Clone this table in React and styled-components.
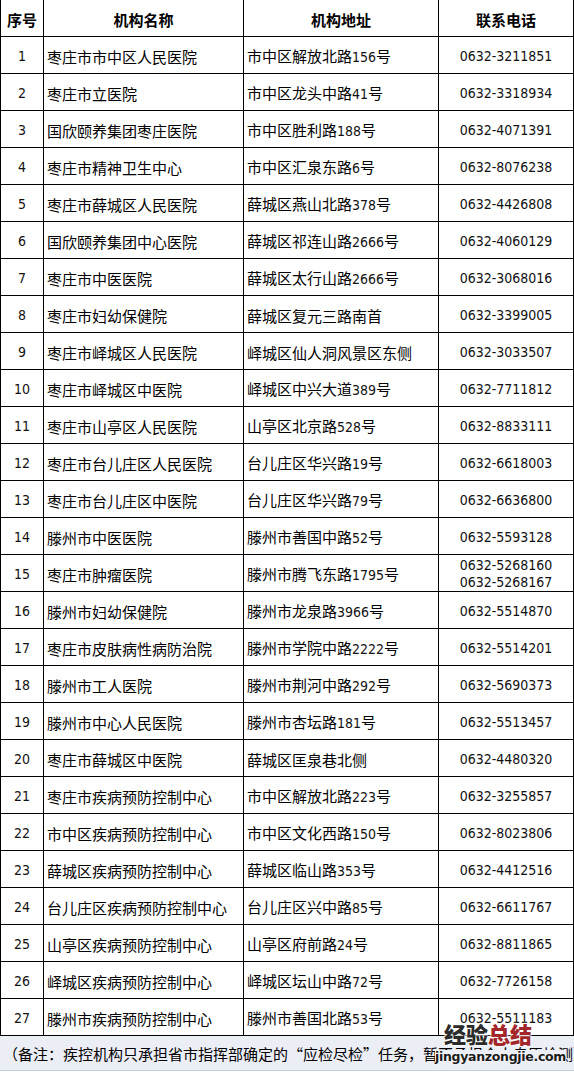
import React from "react";
import styled, { createGlobalStyle } from "styled-components";

const Global = createGlobalStyle`
  html, body { margin: 0; padding: 0; background: #fff; }
  body { font-family: "Noto Sans CJK SC", "Noto Sans", sans-serif; color: #000; }
`;

const rows = [
  ["枣庄市市中区人民医院", "市中区解放北路156号", ["0632-3211851"]],
  ["枣庄市立医院", "市中区龙头中路41号", ["0632-3318934"]],
  ["国欣颐养集团枣庄医院", "市中区胜利路188号", ["0632-4071391"]],
  ["枣庄市精神卫生中心", "市中区汇泉东路6号", ["0632-8076238"]],
  ["枣庄市薛城区人民医院", "薛城区燕山北路378号", ["0632-4426808"]],
  ["国欣颐养集团中心医院", "薛城区祁连山路2666号", ["0632-4060129"]],
  ["枣庄市中医医院", "薛城区太行山路2666号", ["0632-3068016"]],
  ["枣庄市妇幼保健院", "薛城区复元三路南首", ["0632-3399005"]],
  ["枣庄市峄城区人民医院", "峄城区仙人洞风景区东侧", ["0632-3033507"]],
  ["枣庄市峄城区中医院", "峄城区中兴大道389号", ["0632-7711812"]],
  ["枣庄市山亭区人民医院", "山亭区北京路528号", ["0632-8833111"]],
  ["枣庄市台儿庄区人民医院", "台儿庄区华兴路19号", ["0632-6618003"]],
  ["枣庄市台儿庄区中医院", "台儿庄区华兴路79号", ["0632-6636800"]],
  ["滕州市中医医院", "滕州市善国中路52号", ["0632-5593128"]],
  ["枣庄市肿瘤医院", "滕州市腾飞东路1795号", ["0632-5268160", "0632-5268167"]],
  ["滕州市妇幼保健院", "滕州市龙泉路3966号", ["0632-5514870"]],
  ["枣庄市皮肤病性病防治院", "滕州市学院中路2222号", ["0632-5514201"]],
  ["滕州市工人医院", "滕州市荆河中路292号", ["0632-5690373"]],
  ["滕州市中心人民医院", "滕州市杏坛路181号", ["0632-5513457"]],
  ["枣庄市薛城区中医院", "薛城区匡泉巷北侧", ["0632-4480320"]],
  ["枣庄市疾病预防控制中心", "市中区解放北路223号", ["0632-3255857"]],
  ["市中区疾病预防控制中心", "市中区文化西路150号", ["0632-8023806"]],
  ["薛城区疾病预防控制中心", "薛城区临山路353号", ["0632-4412516"]],
  ["台儿庄区疾病预防控制中心", "台儿庄区兴中路85号", ["0632-6611767"]],
  ["山亭区疾病预防控制中心", "山亭区府前路24号", ["0632-8811865"]],
  ["峄城区疾病预防控制中心", "峄城区坛山中路72号", ["0632-7726158"]],
  ["滕州市疾病预防控制中心", "滕州市善国北路53号", ["0632-5511183"]],
];

const Page = styled.div`
  width: 574px;
`;

const Table = styled.div`
  display: grid;
  grid-template-columns: 42px 199px 194px 134px;
  grid-auto-rows: 36px;
  gap: 1px;
  padding: 0 1px 1px 1px;
  background: #000;
`;

const Cell = styled.div`
  background: #fff;
  display: flex;
  flex-direction: column;
  justify-content: center;
  align-items: ${(p) => (p.$left ? "flex-start" : "center")};
  padding: 2px 0 0 ${(p) => (p.$left ? "3px" : "0")};
  font-size: 15px;
  line-height: 17px;
  font-weight: ${(p) => (p.$head ? 700 : 400)};
  white-space: nowrap;
  overflow: hidden;
`;

const Num = styled.span`
  font-family: "DejaVu Sans Condensed", "DejaVu Sans", sans-serif;
  font-size: 14px;
  line-height: 17px;
  color: #111;
`;

const Note = styled.div`
  position: relative;
  height: 34px;
  background: #eceef6;
  border-bottom: 1px solid #c5cbe0;
  display: flex;
  align-items: center;
  padding-left: 3px;
  font-size: 15px;
  white-space: nowrap;
`;

const NoteText = styled.div`
  overflow: hidden;
  width: 571px;
`;

const Mark = styled.div`
  position: absolute;
  left: 444px;
  top: -16px;
  font-family: "Noto Sans CJK SC", sans-serif;
  font-weight: 900;
  font-size: 22px;
  line-height: 26px;
  text-shadow: 0 0 2px #fff, 0 0 2px #fff, 0 0 3px #fff;
`;

const MarkPart = styled.span`
  color: ${(p) => p.$c};
`;

const MarkUrl = styled.div`
  position: absolute;
  left: 435px;
  top: 14px;
  font-family: "DejaVu Sans", "Liberation Sans", sans-serif;
  font-weight: 700;
  font-size: 12.5px;
  line-height: 14px;
  letter-spacing: -0.3px;
  color: #1a1a1a;
  background: #eceef6;
  text-shadow: 0 0 1px #fff, 0 0 2px #fff;
`;

function Mixed({ text }) {
  const parts = text.split(/(\d+)/).filter(Boolean);
  return parts.map((p, i) => (/^\d+$/.test(p) ? <Num key={i}>{p}</Num> : <span key={i}>{p}</span>));
}

export default function App() {
  return (
    <Page>
      <Global />
      <Table>
        <Cell $head>序号</Cell>
        <Cell $head>机构名称</Cell>
        <Cell $head>机构地址</Cell>
        <Cell $head>联系电话</Cell>
        {rows.map(([name, addr, phones], i) => (
          <React.Fragment key={i}>
            <Cell>
              <Num>{i + 1}</Num>
            </Cell>
            <Cell $left>{name}</Cell>
            <Cell $left>
              <div>
                <Mixed text={addr} />
              </div>
            </Cell>
            <Cell>
              {phones.map((ph) => (
                <Num key={ph}>{ph}</Num>
              ))}
            </Cell>
          </React.Fragment>
        ))}
      </Table>
      <Note>
        <NoteText>（备注：疾控机构只承担省市指挥部确定的“应检尽检”任务，暂不承担个人自愿检测）</NoteText>
        <Mark>
          <MarkPart $c="#2b2b2b">经验</MarkPart>
          <MarkPart $c="#a3262a">总结</MarkPart>
        </Mark>
        <MarkUrl>jingyanzongjie.com</MarkUrl>
      </Note>
    </Page>
  );
}
